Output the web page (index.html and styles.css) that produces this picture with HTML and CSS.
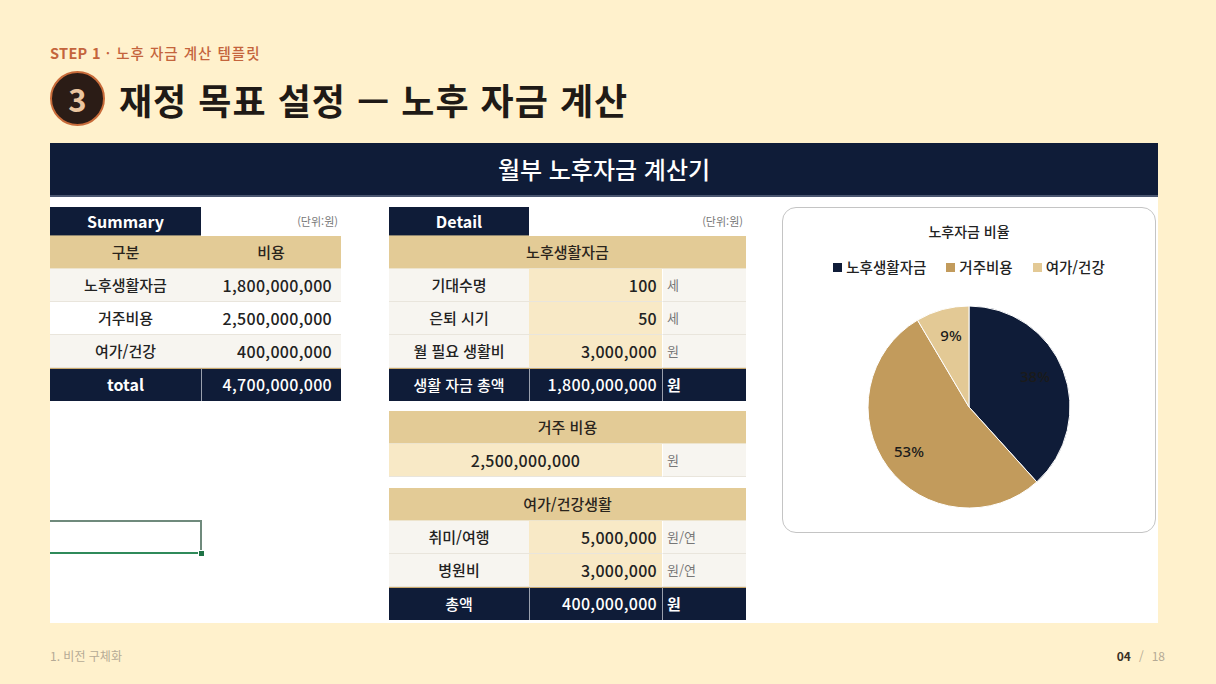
FILE: index.html
```html
<!DOCTYPE html>
<html lang="ko">
<head>
<meta charset="utf-8">
<link rel="stylesheet" href="styles.css">
</head>
<body>
<div class="page">
  <div class="step"><b>STEP 1</b> · 노후 자금 계산 템플릿</div>
  <div class="title-row">
    <div class="badge">3</div>
    <h1 class="title">재정 목표 설정 — 노후 자금 계산</h1>
  </div>

  <div class="panel">
    <div class="panel-head">월부 노후자금 계산기</div>
    <div class="panel-body">

      <div class="summary">
        <div class="caption">
          <div class="tag tag-sum">Summary</div>
          <div class="unit">(단위:원)</div>
        </div>
        <div class="sgrid">
          <div class="c hd">구분</div><div class="c hd">비용</div>
          <div class="c lt ctr">노후생활자금</div><div class="c lt num">1,800,000,000</div>
          <div class="c wt ctr">거주비용</div><div class="c wt num">2,500,000,000</div>
          <div class="c lt ctr">여가/건강</div><div class="c lt num">400,000,000</div>
          <div class="c nv ctr b">total</div><div class="c nv num nvr">4,700,000,000</div>
        </div>
        <div class="selcell"><span class="handle"></span></div>
      </div>

      <div class="detail">
        <div class="caption">
          <div class="tag tag-det">Detail</div>
          <div class="unit">(단위:원)</div>
        </div>
        <div class="dgrid">
          <div class="c hd span3">노후생활자금</div>
          <div class="c lt ctr">기대수명</div><div class="c pc num">100</div><div class="c lt u">세</div>
          <div class="c lt ctr">은퇴 시기</div><div class="c pc num">50</div><div class="c lt u">세</div>
          <div class="c lt ctr">월 필요 생활비</div><div class="c pc num">3,000,000</div><div class="c lt u">원</div>
          <div class="c nv ctr">생활 자금 총액</div><div class="c nv num nvr">1,800,000,000</div><div class="c nv u nvr">원</div>
        </div>
        <div class="dgrid gap">
          <div class="c hd span3">거주 비용</div>
          <div class="c pc span2 ctr numc">2,500,000,000</div><div class="c lt u">원</div>
        </div>
        <div class="dgrid gap">
          <div class="c hd span3">여가/건강생활</div>
          <div class="c lt ctr">취미/여행</div><div class="c pc num">5,000,000</div><div class="c lt u">원/연</div>
          <div class="c lt ctr">병원비</div><div class="c pc num">3,000,000</div><div class="c lt u">원/연</div>
          <div class="c nv ctr">총액</div><div class="c nv num nvr">400,000,000</div><div class="c nv u nvr">원</div>
        </div>
      </div>

      <div class="chart">
        <div class="chart-title">노후자금 비율</div>
        <div class="legend">
          <span class="li"><i class="sw sw1"></i>노후생활자금</span>
          <span class="li"><i class="sw sw2"></i>거주비용</span>
          <span class="li"><i class="sw sw3"></i>여가/건강</span>
        </div>
        <svg class="pie" width="210" height="210" viewBox="0 0 210 210">
          <path d="M105,105 L105,4 A101,101 0 0 1 172.78,179.88 Z" fill="#0f1c38" stroke="#ffffff" stroke-width="1"/>
          <path d="M105,105 L172.78,179.88 A101,101 0 1 1 53.53,18.10 Z" fill="#c29b5c" stroke="#ffffff" stroke-width="1"/>
          <path d="M105,105 L53.53,18.10 A101,101 0 0 1 105,4 Z" fill="#e3c995" stroke="#ffffff" stroke-width="1"/>
          <text x="171" y="80" class="pl">38%</text>
          <text x="45" y="155" class="pl">53%</text>
          <text x="87" y="39" class="pl">9%</text>
        </svg>
      </div>

    </div>
  </div>

  <div class="footer">
    <span class="foot-l">1. 비전 구체화</span>
    <span class="foot-r"><b>04</b><span class="sl">/</span>18</span>
  </div>
</div>
</body>
</html>
```

FILE: styles.css
```css
* { box-sizing: border-box; }
html, body { margin: 0; padding: 0; }
body {
  background: #fff1cc;
  font-family: "Noto Sans CJK KR", "Noto Sans", sans-serif;
  color: #222;
}
.page {
  width: 1216px;
  height: 684px;
  padding: 43px 51px 0 50px;
  display: flex;
  flex-direction: column;
  overflow: hidden;
}
.step {
  height: 20px;
  line-height: 20px;
  font-size: 14.5px;
  font-weight: 500;
  letter-spacing: 1px;
  color: #c4643c;
}
.step b { font-weight: 700; letter-spacing: 0.3px; }
.title-row {
  margin-top: 8px;
  height: 55px;
  display: flex;
  align-items: center;
  gap: 14px;
}
.badge {
  width: 55px;
  height: 55px;
  border-radius: 50%;
  background: #2b1c16;
  border: 2px solid #c86b3a;
  color: #ebc6a0;
  font-size: 31px;
  font-weight: 700;
  display: flex;
  align-items: center;
  justify-content: center;
  line-height: 1;
}
.title {
  margin: 0;
  font-size: 36px;
  font-weight: 700;
  color: #1f1a16;
  line-height: 1;
  letter-spacing: 1px;
}
.panel {
  margin-top: 17px;
  width: 1108px;
  height: 480px;
  background: #ffffff;
  display: flex;
  flex-direction: column;
}
.panel-head {
  height: 54px;
  background: #0f1c38;
  color: #ffffff;
  font-size: 24px;
  font-weight: 500;
  text-align: center;
  line-height: 52px;
  border-bottom: 2px solid #4a5670;
}
.panel-body {
  flex: 1;
  display: flex;
  padding-top: 10px;
  align-items: flex-start;
}
.summary { width: 291px; }
.detail { width: 357px; margin-left: 48px; }
.caption {
  display: flex;
  height: 29px;
}
.tag {
  background: #0f1c38;
  color: #ffffff;
  font-size: 16px;
  font-weight: 700;
  text-align: center;
  line-height: 29px;
  border-bottom: 1px solid #8c8470;
}
.tag-sum { width: 151px; }
.tag-det { width: 140px; }
.unit {
  flex: 1;
  text-align: right;
  padding-right: 3px;
  font-size: 11px;
  color: #777;
  line-height: 29px;
}
.sgrid {
  display: grid;
  grid-template-columns: 151px 140px;
  grid-auto-rows: 33px;
}
.dgrid {
  display: grid;
  grid-template-columns: 140px 133px 84px;
  grid-auto-rows: 33px;
}
.dgrid.gap { margin-top: 10px; }
.dgrid.gap + .dgrid.gap { margin-top: 11px; }
.c {
  font-size: 15px;
  font-weight: 500;
  line-height: 32px;
  border-bottom: 1px solid #e9e5dc;
  white-space: nowrap;
}
.hd {
  background: #e3cb96;
  text-align: center;
  color: #2a241c;
  border-bottom: 1px solid #ede4cd;
}
.span3 { grid-column: span 3; }
.span2 { grid-column: span 2; }
.lt { background: #f7f5f0; }
.wt { background: #ffffff; }
.pc { background: #f8e9c6; }
.ctr { text-align: center; }
.num {
  text-align: right;
  padding-right: 5px;
  font-size: 16px;
  letter-spacing: 0.3px;
}
.sgrid .num { padding-right: 9px; }
.numc { font-size: 16px; letter-spacing: 0.3px; }
.u {
  padding-left: 4px;
  font-size: 13px;
  color: #777;
  font-weight: 400;
  border-left: 1px solid #ffffff;
}
.nv {
  background: #0f1c38;
  color: #ffffff;
  border-top: 1px solid #c9a86c;
  border-bottom: none;
  line-height: 31px;
}
.nv.u { color: #ffffff; font-weight: 700; font-size: 15px; }
.nvr { border-left: 1px solid #9aa0ad; }
.b { font-weight: 700; font-size: 16px; }
.selcell {
  position: relative;
  margin-top: 119px;
  width: 152px;
  height: 34px;
  border-top: 2px solid #6f8a7c;
  border-right: 2px solid #6f8a7c;
  border-bottom: 2px solid #2f8a5a;
}
.handle {
  position: absolute;
  right: -5px;
  bottom: -5px;
  width: 7px;
  height: 7px;
  background: #1f7346;
  border: 1px solid #ffffff;
}
.chart {
  margin-left: 36px;
  width: 374px;
  height: 326px;
  border: 1.5px solid #c4c4c4;
  border-radius: 14px;
  display: flex;
  flex-direction: column;
  align-items: center;
  padding-top: 13px;
}
.chart-title {
  font-size: 14px;
  font-weight: 500;
  line-height: 20px;
  color: #222;
}
.legend {
  margin-top: 16px;
  display: flex;
  gap: 20px;
  font-size: 14.5px;
  font-weight: 500;
  line-height: 20px;
}
.li { display: flex; align-items: center; gap: 4px; }
.sw { display: inline-block; width: 9px; height: 9px; }
.sw1 { background: #0f1c38; }
.sw2 { background: #c29b5c; }
.sw3 { background: #e3c995; }
.pie { margin-top: 25px; display: block; }
.pl {
  font-family: "Noto Sans", "Noto Sans CJK KR", sans-serif;
  font-size: 15px;
  font-weight: 500;
  fill: #1a1a1a;
  text-anchor: middle;
}
.footer {
  margin-top: 25px;
  display: flex;
  justify-content: space-between;
  font-size: 12px;
  line-height: 16px;
  color: #b5aa95;
}
.foot-r b { color: #3a3025; font-weight: 700; }
.sl { margin: 0 8px; }
```
